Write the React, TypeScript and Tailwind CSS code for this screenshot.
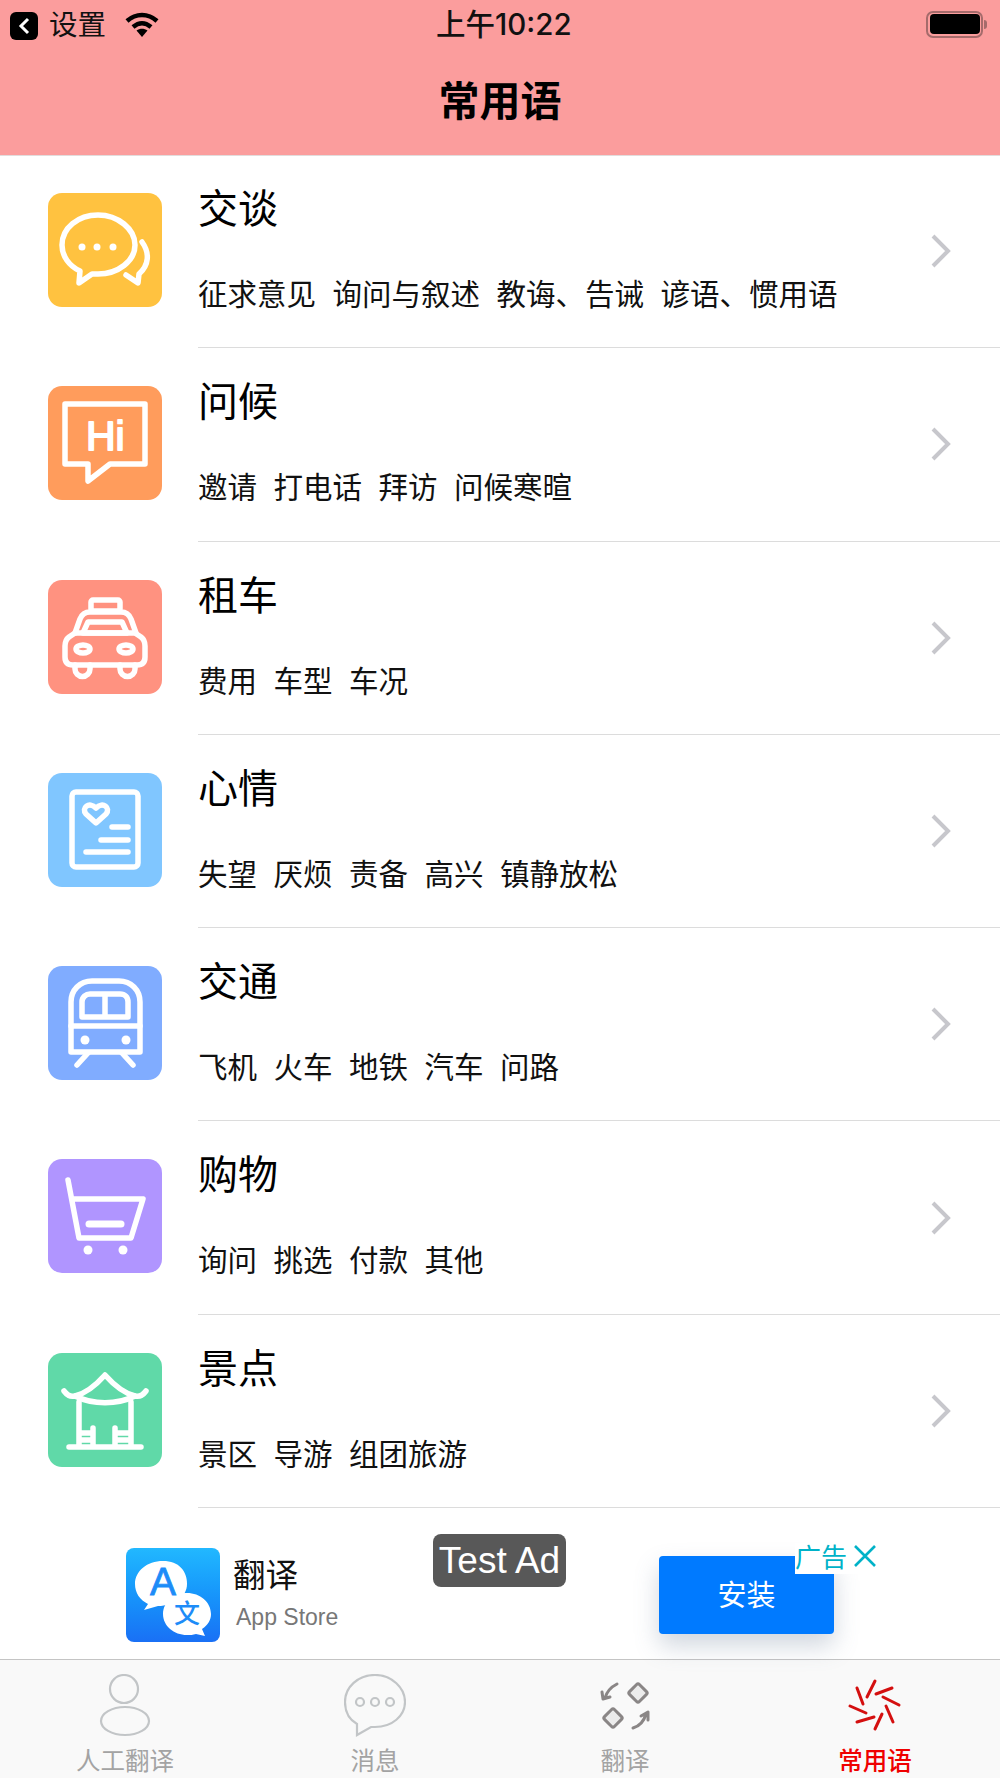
import type { ReactNode } from 'react';

const cjk = "font-['Noto_Sans_CJK_SC','Liberation_Sans',sans-serif]";

const topics: { title: string; subs: string[]; color: string; icon: ReactNode }[] = [
  {
    title: '交谈',
    subs: ['征求意见', '询问与叙述', '教诲、告诫', '谚语、惯用语'],
    color: 'bg-[#ffc240]',
    icon: (
      <>
        <path d="M50 22c-20 0-36 13-36 30 0 11 7 21 18 26l-1 12 13-9c2 0 4 0 6 0 20 0 37-13 37-29S70 22 50 22z" />
        <path d="M94 49c8 11 7 23-3 32l-1 9-12-8" />
        <circle cx="34" cy="54" r="3.5" fill="#fff" stroke="none" />
        <circle cx="49" cy="54" r="3.5" fill="#fff" stroke="none" />
        <circle cx="65" cy="54" r="3.5" fill="#fff" stroke="none" />
      </>
    ),
  },
  {
    title: '问候',
    subs: ['邀请', '打电话', '拜访', '问候寒暄'],
    color: 'bg-[#ff9c5c]',
    icon: (
      <>
        <path d="M17 18H97V78H62L40 95V78H17Z" />
        <text x="38" y="64" fontSize="41" fontFamily="Liberation Sans" fill="#fff" stroke="#fff" strokeWidth="1.8">Hi</text>
      </>
    ),
  },
  {
    title: '租车',
    subs: ['费用', '车型', '车况'],
    color: 'bg-[#ff9280]',
    icon: (
      <>
        <rect x="43" y="20" width="29" height="11" rx="2" />
        <path d="M27 53l5-14c2-5 5-7 10-7h31c5 0 8 2 10 7l5 14" />
        <path d="M35 53l5-11h34l5 11z" />
        <path d="M27 53H87L93 57Q97 60 97 66V77Q97 85 89 85H25Q17 85 17 77V66Q17 60 21 57Z" />
        <ellipse cx="35" cy="69" rx="7" ry="4" />
        <ellipse cx="78" cy="69" rx="7" ry="4" />
        <path d="M27 85v4a7.5 7.5 0 0 0 15 0v-4M72 85v4a7.5 7.5 0 0 0 15 0v-4" />
      </>
    ),
  },
  {
    title: '心情',
    subs: ['失望', '厌烦', '责备', '高兴', '镇静放松'],
    color: 'bg-[#80c6ff]',
    icon: (
      <>
        <rect x="24" y="19" width="66" height="75" rx="4" />
        <path d="M48 50l-10-9c-5-6 3-13 10-6 7-7 15 0 10 6z" />
        <path d="M64 54H80M53 67H80M38 79H80" />
      </>
    ),
  },
  {
    title: '交通',
    subs: ['飞机', '火车', '地铁', '汽车', '问路'],
    color: 'bg-[#80acff]',
    icon: (
      <>
        <path d="M23 86V36c0-12 9-21 21-21h27c12 0 21 9 21 21v50z" />
        <path d="M23 60H92" />
        <path d="M34 51V36c0-5 4-8 8-8h30c5 0 8 3 8 8v15zM57 28V51" />
        <circle cx="37" cy="74" r="4.5" fill="#fff" stroke="none" />
        <circle cx="78" cy="74" r="4.5" fill="#fff" stroke="none" />
        <path d="M40 87L29 99M74 87L85 99" />
      </>
    ),
  },
  {
    title: '购物',
    subs: ['询问', '挑选', '付款', '其他'],
    color: 'bg-[#b095ff]',
    icon: (
      <>
        <path d="M20 21L31 79H83L95 40H25" />
        <path d="M41 65H73" strokeWidth="7" />
        <circle cx="40" cy="91" r="4.5" fill="#fff" stroke="none" />
        <circle cx="75" cy="91" r="4.5" fill="#fff" stroke="none" />
      </>
    ),
  },
  {
    title: '景点',
    subs: ['景区', '导游', '组团旅游'],
    color: 'bg-[#60d9a8]',
    icon: (
      <>
        <path d="M16 38c3 4 7 6 11 5 12-3 22-12 30-21 8 9 18 18 30 21 4 1 8-1 11-5" />
        <path d="M27 43c18 9 42 9 60 0" />
        <path d="M31 49V92M83 49V92M45 75V92M67 75V92M31 80H45M31 87H45M67 80H83M67 87H83M21 94H93" />
      </>
    ),
  },
];

function Row({ title, subs, color, icon }: (typeof topics)[number]) {
  return (
    <div className="flex h-[193.3px] pl-[48px]">
      <div className={`mt-[38px] flex h-[114px] w-[114px] shrink-0 rounded-[14px] ${color}`}>
        <svg viewBox="0 0 114 114" className="h-full w-full" fill="none" stroke="#fff" strokeWidth="5.5" strokeLinecap="round" strokeLinejoin="round">
          {icon}
        </svg>
      </div>
      <div className="ml-[36px] flex flex-1 items-center border-b border-[#dcdcdc] pr-[48px]">
        <div className="flex-1 self-start pt-[23px]">
          <div className="text-[40px] leading-[56px] text-black">{title}</div>
          <div className="mt-[36px] flex gap-[16.5px] text-[29.5px] leading-[44px] text-[#111]">
            {subs.map((s) => (
              <span key={s}>{s}</span>
            ))}
          </div>
        </div>
        <svg width="22" height="34" viewBox="0 0 22 34" fill="none" stroke="#c7c7cc" strokeWidth="4">
          <path d="M3 2L18 17L3 32" />
        </svg>
      </div>
    </div>
  );
}

function StatusBar() {
  return (
    <div className="relative flex h-[52px] items-center pl-[10px] pr-[13px]">
      <div className="flex h-[28px] w-[28px] items-center justify-center rounded-[6px] bg-black">
        <svg width="12" height="18" viewBox="0 0 12 18" fill="none" stroke="#fff" strokeWidth="3">
          <path d="M10 2L3 9L10 16" />
        </svg>
      </div>
      <span className="ml-[11px] mb-[5px] text-[28.5px] leading-none text-[#111]">设置</span>
      <svg width="34" height="26" viewBox="0 0 34 26" className="ml-[19px] mb-[2px]" fill="none" stroke="#000" strokeWidth="4.5">
        <path d="M2 9c9-8 21-8 30 0" />
        <path d="M8 15c6-5 12-5 18 0" />
        <path d="M11.5 18.5L17 25L22.5 18.5C19 16 15 16 11.5 18.5Z" fill="#000" stroke="none" />
      </svg>
      <span className="absolute left-[436px] top-[7px] text-[29.5px] leading-[34px] font-medium text-[#111] font-['Inter','Noto_Sans_CJK_SC',sans-serif]">上午10:22</span>
      <div className="ml-auto mb-[4px] flex items-center">
        <div className="h-[27px] w-[57px] rounded-[7px] border-[2.5px] border-[#a56b6b] p-[1.5px]">
          <div className="h-full w-full rounded-[4px] bg-black" />
        </div>
        <div className="ml-[1px] h-[9px] w-[3px] rounded-r-[3px] bg-[#a56b6b]" />
      </div>
    </div>
  );
}

function AdBar() {
  return (
    <div className="relative flex h-[151px] items-start">
      <div className="ml-[126px] mt-[40px] h-[94px] w-[94px] shrink-0 overflow-hidden rounded-[8px] bg-gradient-to-b from-[#22b8ff] to-[#1a70f5]">
        <svg viewBox="0 0 94 94" className="h-full w-full">
          <path d="M37 13c-16 0-28 10-28 23 0 9 5 16 13 20l-4 6 14-4c16 0 29-9 29-22S53 13 37 13z" fill="#fff" />
          <path d="M61 45c-13 0-24 9-24 21s11 21 24 21c3 0 6 0 9-1l9 2-3-7c6-4 9-9 9-15 0-12-11-21-24-21z" fill="#fff" />
          <text x="37" y="47" textAnchor="middle" fontSize="39" fontFamily="Liberation Sans" fill="#1d8cf8" stroke="#1d8cf8" strokeWidth="0.8">A</text>
          <text x="61" y="75" textAnchor="middle" fontSize="26" fontFamily="Noto Sans CJK SC" fontWeight="500" fill="#1d8cf8">文</text>
        </svg>
      </div>
      <div className="ml-[13px] mt-[42px]">
        <div className="text-[32.5px] leading-[46px] text-[#111]">翻译</div>
        <div className="ml-[3px] mt-[5px] text-[23px] leading-[32px] text-[#777] font-['Liberation_Sans',sans-serif]">App Store</div>
      </div>
      <div className="absolute left-[433px] top-[26px] flex h-[53px] w-[133px] items-center justify-center rounded-[8px] bg-[#585858] text-[37px] text-white font-['Liberation_Sans',sans-serif]">
        Test Ad
      </div>
      <button className="absolute left-[659px] top-[48px] flex h-[78px] w-[175px] items-center justify-center rounded-[4px] bg-[#007aff] pb-[3px] text-[29px] text-white shadow-[0_12px_24px_rgba(90,110,140,0.28)]">
        安装
      </button>
      <div className="absolute left-[795px] top-[35px] flex h-[31px] items-center bg-white pr-[2px] text-[26px] leading-none text-[#00b2c8]">
        <span className="mb-[6px]">广告</span>
        <svg width="24" height="24" viewBox="0 0 24 24" fill="none" stroke="#00b2c8" strokeWidth="2.6" className="ml-[6px] mb-[6px]">
          <path d="M2 2L22 22M22 2L2 22" />
        </svg>
      </div>
    </div>
  );
}

function TabBar() {
  const tabs: { label: string; active?: boolean; icon: ReactNode }[] = [
    {
      label: '人工翻译',
      icon: (
        <g fill="none" stroke="#c2c5c7" strokeWidth="2.2">
          <circle cx="30" cy="15" r="14" />
          <ellipse cx="31" cy="47" rx="24" ry="14" />
        </g>
      ),
    },
    {
      label: '消息',
      icon: (
        <g fill="none" stroke="#c2c5c7" strokeWidth="2.2">
          <path d="M31 1C14 1 1 13 1 28c0 11 5 18 12 22v11l14-8c2 0 3 0 4 0 17 0 30-11 30-25S48 1 31 1z" />
          <circle cx="16" cy="28" r="4" />
          <circle cx="31" cy="28" r="4" />
          <circle cx="46" cy="28" r="4" />
        </g>
      ),
    },
    {
      label: '翻译',
      icon: (
        <g fill="#ececec" stroke="#8a8686" strokeWidth="3" strokeLinejoin="round" strokeLinecap="round">
          <rect x="37" y="12" width="14" height="14" rx="2" transform="rotate(45 44 19)" />
          <rect x="12" y="37" width="14" height="14" rx="2" transform="rotate(45 19 44)" />
          <path d="M23 10C17 13 13 17 11 24M8 18L9 25L16 23" fill="none" />
          <path d="M39 54C46 52 50 47 52 40M47 42L54 38L54 46" fill="none" />
        </g>
      ),
    },
    {
      label: '常用语',
      active: true,
      icon: (
        <g stroke="#d40f0f" strokeWidth="3" strokeLinecap="round" fill="none">
          <path d="M31 7L23 23M13 14L19 30M48 14L32 20M39 23L55 31M6 32L22 39M42 32L49 48M13 48L30 43M38 40L31 55" />
        </g>
      ),
    },
  ];
  return (
    <div className="flex h-[119px] shrink-0 border-t border-[#c4c4c4] bg-[#f9f9f9]">
      {tabs.map((t) => (
        <div key={t.label} className="flex flex-1 flex-col items-center pt-[14px]">
          <svg width="62" height="64" viewBox="0 0 62 64">
            {t.icon}
          </svg>
          <span className={`mt-[5px] text-[24.5px] leading-[34px] ${t.active ? 'font-medium text-[#ef0000]' : 'text-[#a3a3a3]'}`}>
            {t.label}
          </span>
        </div>
      ))}
    </div>
  );
}

export default function App() {
  return (
    <div className={`flex h-[1778px] w-[1000px] flex-col overflow-hidden bg-white ${cjk}`}>
      <div className="h-[155px] shrink-0 bg-[#fb9d9d] shadow-[0_1px_0_#e2dcdc]">
        <StatusBar />
        <div className="mt-[18px] text-center text-[41px] leading-[56px] font-semibold text-black">常用语</div>
      </div>
      <div className="flex-1">
        {topics.map((t) => (
          <Row key={t.title} {...t} />
        ))}
        <AdBar />
      </div>
      <TabBar />
    </div>
  );
}
